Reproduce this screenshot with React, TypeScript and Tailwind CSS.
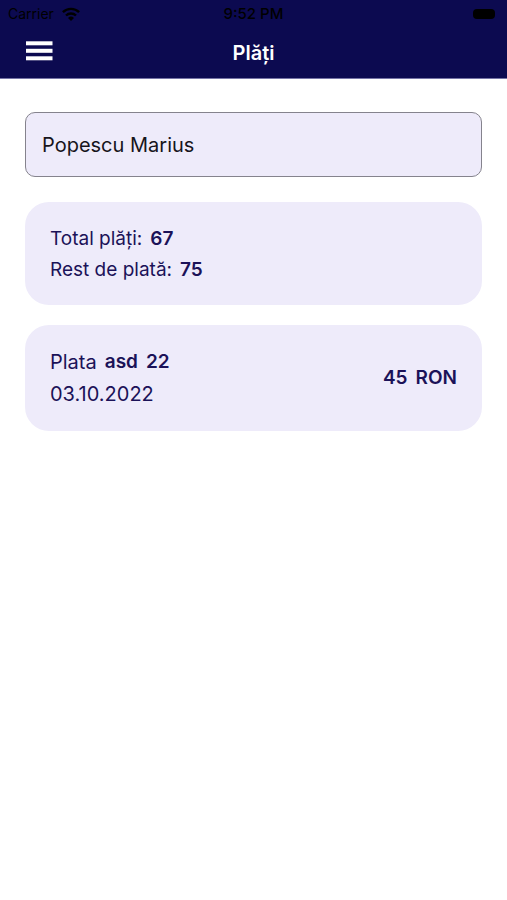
import React, { useState } from "react";

const payments = [
  {
    id: 1,
    name: "asd",
    number: 22,
    date: "03.10.2022",
    amount: 45,
    currency: "RON",
  },
];

const WifiIcon = () => (
  <svg width="18" height="14" viewBox="0 0 18 14" aria-hidden="true">
    <g fill="none" stroke="black" strokeWidth="2.4">
      <path d="M0.9 5.2 A11.6 11.6 0 0 1 17.1 5.2" />
      <path d="M4 8.5 A7.2 7.2 0 0 1 14 8.5" />
    </g>
    <path d="M9 14 L6 10.9 A4.3 4.3 0 0 1 12 10.9 Z" fill="black" />
  </svg>
);

const StatusBar = () => {
  return (
    <div className="grid grid-cols-3 items-center h-7 px-2 text-sm text-black">
      <div className="flex items-center gap-2">
        <span>Carrier</span>
        <WifiIcon />
      </div>
      <span className="text-center text-[15px] font-medium">9:52 PM</span>
      <div className="flex justify-end pr-1">
        <span className="w-[22px] h-[10px] rounded-sm bg-black"></span>
      </div>
    </div>
  );
};

const Header = () => {
  return (
    <header className="bg-[#0c0a50] border-b border-[#7573a5]">
      <StatusBar />
      <div className="grid grid-cols-3 items-center h-[50px] px-6">
        <button aria-label="Meniu" className="w-8">
          <svg width="30" height="24" viewBox="0 0 30 24" fill="white">
            <rect x="2" y="0.3" width="26.5" height="4" />
            <rect x="2" y="7.8" width="26.5" height="4" />
            <rect x="2" y="15.3" width="26.5" height="4" />
          </svg>
        </button>
        <h1 className="text-center text-xl font-semibold text-white">Plăți</h1>
      </div>
    </header>
  );
};

export default function App() {
  const [name, setName] = useState("Popescu Marius");

  return (
    <div className="min-h-screen bg-white font-['Inter','Liberation_Sans',sans-serif]">
      <Header />

      <main className="flex flex-col px-[25px] pt-[33px] text-[#1b1258]">
        <input
          aria-label="Nume"
          className="w-full h-[65px] px-4 rounded-[10px] border border-[#85838d] bg-[#eeebfa] text-xl text-[#17151c] outline-none"
          value={name}
          onChange={(e) => setName(e.target.value)}
        />

        <section className="mt-[25px] px-[25px] pt-[21px] pb-5 rounded-3xl bg-[#eeebfa] text-[19px] leading-[31px]">
          <p className="flex gap-2">
            Total plăți: <b className="font-semibold">67</b>
          </p>
          <p className="flex gap-2">
            Rest de plată: <b className="font-semibold">75</b>
          </p>
        </section>

        {payments.map((x) => {
          return (
            <section
              key={x.id}
              className="flex items-center justify-between mt-5 px-[25px] py-[21px] rounded-3xl bg-[#eeebfa] leading-8"
            >
              <div className="text-xl leading-8">
                <p className="flex gap-2">
                  Plata
                  <b className="flex gap-2 text-[19px] leading-8 font-semibold">
                    <span>{x.name}</span>
                    <span>{x.number}</span>
                  </b>
                </p>
                <p>{x.date}</p>
              </div>
              <b className="flex gap-2 text-[19px] leading-8 font-semibold">
                <span>{x.amount}</span>
                <span>{x.currency}</span>
              </b>
            </section>
          );
        })}
      </main>
    </div>
  );
}
